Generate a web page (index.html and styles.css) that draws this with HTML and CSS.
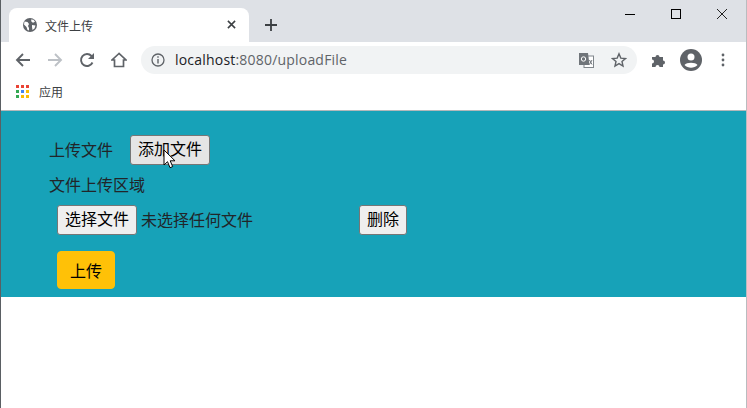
FILE: index.html
```html
<!DOCTYPE html>
<html lang="zh">
<head>
<meta charset="utf-8">
<title>文件上传</title>
<link rel="stylesheet" href="styles.css">
</head>
<body>
<div class="window">
  <div class="tabstrip">
    <div class="tab">
      <svg class="favicon" viewBox="0 0 16 16"><circle cx="8" cy="8" r="7" fill="#5f6368"/><path d="M2.500 4.500l3 .5 1.500 2-1 2 1 2v2.500l-1.500-.5-1-3-2.500-2.500zM9 2.500l2.500.3 1.500 2-2 1-1.500-1zM10 8l3.500.5-1 3-2 1.500-.5-3z" fill="#fff"/></svg>
      <span class="tab-title">文件上传</span>
      <svg class="tab-close" viewBox="0 0 10 10"><path d="M1 1l8 8M9 1l-8 8" stroke="#3c4043" stroke-width="1.700" fill="none"/></svg>
    </div>
    <svg class="newtab" viewBox="0 0 12 12"><path d="M6 0v12M0 6h12" stroke="#3c4043" stroke-width="1.800" fill="none"/></svg>
    <div class="winctl">
      <svg viewBox="0 0 12 12"><path d="M1 6.500h10" stroke="#000" stroke-width="1" fill="none"/></svg>
      <svg viewBox="0 0 12 12"><rect x="1.500" y="1.500" width="9" height="9" stroke="#000" stroke-width="1" fill="none"/></svg>
      <svg viewBox="0 0 12 12"><path d="M1 1l10 10M11 1L1 11" stroke="#222" stroke-width="1" fill="none"/></svg>
    </div>
  </div>
  <div class="toolbar">
    <svg class="nav" viewBox="0 0 16 16"><path d="M15 8H2M8 2L2 8l6 6" stroke="#5f6368" stroke-width="1.900" fill="none"/></svg>
    <svg class="nav" viewBox="0 0 16 16"><path d="M1 8h13M8 2l6 6-6 6" stroke="#bdc1c6" stroke-width="1.900" fill="none"/></svg>
    <svg class="nav" viewBox="0 0 16 16"><path d="M13.500 10.500A6 6 0 1 1 12.500 4L14 5.500" stroke="#5f6368" stroke-width="1.900" fill="none"/><path d="M15 1v6H9z" fill="#5f6368"/></svg>
    <svg class="nav" viewBox="0 0 16 16"><path d="M8 1.500L1 8h2.500v6.500h9V8H15z" stroke="#5f6368" stroke-width="1.700" fill="none"/></svg>
    <div class="omnibox">
      <svg class="info" viewBox="0 0 14 14"><circle cx="7" cy="7" r="6" stroke="#5f6368" stroke-width="1.300" fill="none"/><path d="M7 6v4.500M7 3.300v1.500" stroke="#5f6368" stroke-width="1.400"/></svg>
      <span class="url"><span class="host">localhost</span>:8080/uploadFile</span>
      <svg class="translate" viewBox="0 0 15 15"><rect x="5" y="3" width="9.500" height="11.500" fill="#fff" stroke="#80868b"/><path d="M0 0h9l1.500 12H0z" fill="#70757a"/><circle cx="4.500" cy="6" r="2.200" stroke="#fff" fill="none"/><path d="M10.500 7l2.500 4.500M13 7l-2.500 4.500" stroke="#70757a"/></svg>
      <svg class="star" viewBox="0 0 16 16"><path d="M8 1.800l1.800 4.300 4.700.4-3.500 3 1 4.500L8 11.600 4 14l1-4.500-3.500-3 4.700-.4z" stroke="#5f6368" stroke-width="1.400" fill="none"/></svg>
    </div>
    <svg class="ext" viewBox="0 0 16 16"><path d="M1 5h3.500a2 2 0 0 1 4 0H12v3.500a2 2 0 0 1 0 4V15H8.500a2 2 0 0 0-4 0H1v-3.500a2 2 0 0 0 0-4z" fill="#5f6368"/></svg>
    <svg class="avatar" viewBox="0 0 22 22"><circle cx="11" cy="11" r="11" fill="#5f6368"/><circle cx="11" cy="8" r="3.500" fill="#fff"/><path d="M4.500 16c2-3 11-3 13 0-3.500 3.500-9.500 3.500-13 0z" fill="#fff"/></svg>
    <svg class="menu" viewBox="0 0 4 14"><circle cx="2" cy="2" r="1.400" fill="#5f6368"/><circle cx="2" cy="7" r="1.400" fill="#5f6368"/><circle cx="2" cy="12" r="1.400" fill="#5f6368"/></svg>
  </div>
  <div class="bookmarks">
    <svg class="apps" viewBox="0 0 14 14">
      <rect x="0" y="0" width="3" height="3" fill="#ea4335"/><rect x="5" y="0" width="3" height="3" fill="#ea4335"/><rect x="10" y="0" width="3" height="3" fill="#ea4335"/>
      <rect x="0" y="5" width="3" height="3" fill="#34a853"/><rect x="5" y="5" width="3" height="3" fill="#4285f4"/><rect x="10" y="5" width="3" height="3" fill="#fbbc04"/>
      <rect x="0" y="10" width="3" height="3" fill="#34a853"/><rect x="5" y="10" width="3" height="3" fill="#fbbc04"/><rect x="10" y="10" width="3" height="3" fill="#fbbc04"/>
    </svg>
    <span class="bm-label">应用</span>
  </div>
  <main class="page">
    <div class="panel">
      <div class="row-add">
        <span class="label">上传文件</span>
        <button class="btn btn-add" type="button">添加文件</button>
      </div>
      <div class="area-title">文件上传区域</div>
      <div class="row-file">
        <button class="btn btn-choose" type="button">选择文件</button>
        <span class="nofile">未选择任何文件</span>
        <button class="btn btn-del" type="button">删除</button>
      </div>
      <button class="btn-upload" type="button">上传</button>
    </div>
  </main>
  <svg class="cursor" viewBox="0 0 14 21"><path d="M1 1v15l3.500-3.300 2.500 6 2.700-1.100-2.500-5.800H12z" fill="#fff" stroke="#000" stroke-width="1"/></svg>
</div>
</body>
</html>
```
FILE: styles.css
```css
* { box-sizing: border-box; }
html, body { margin: 0; height: 100%; overflow: hidden; background: #fff; }
body { font-family: "Liberation Sans", "Noto Sans CJK SC", sans-serif; }
.window {
  position: relative;
  width: 747px;
  height: 408px;
  display: flex;
  flex-direction: column;
  border-left: 1px solid #5a5f63;
  border-right: 1px solid #b9bcbf;
}
.tabstrip {
  height: 42px;
  background: #dee1e6;
  display: flex;
  align-items: flex-end;
  padding-left: 8px;
}
.tab {
  width: 240px;
  height: 34px;
  background: #fff;
  border-radius: 8px 8px 0 0;
  display: flex;
  align-items: center;
  padding: 0 13px;
}
.favicon { width: 16px; height: 16px; flex: none; margin-top: -1px; }
.tab-title { font-size: 12px; color: #3c4043; margin-left: 7px; flex: 1; margin-top: 1px; }
.tab-close { width: 9px; height: 9px; margin-top: -1px; }
.newtab { width: 12px; height: 12px; margin: 0 0 11px 16px; }
.winctl { margin-left: auto; align-self: flex-start; display: flex; gap: 34px; padding: 8px 18px 0 0; }
.winctl svg { width: 12px; height: 12px; display: block; }
.toolbar {
  height: 36px;
  display: flex;
  align-items: center;
  background: #fff;
  padding-left: 14px;
}
.nav { width: 16px; height: 16px; margin-right: 16px; flex: none; }
.omnibox {
  width: 496px;
  height: 28px;
  margin-left: -2px;
  border-radius: 14px;
  background: #f1f3f4;
  display: flex;
  align-items: center;
  padding: 0 10px;
}
.info { width: 14px; height: 14px; flex: none; }
.url { font-size: 14px; letter-spacing: 0.2px; padding-bottom: 2px; color: #5f6368; margin-left: 10px; flex: 1; font-family: "Open Sans", sans-serif; }
.host { color: #202124; }
.translate { width: 15px; height: 15px; margin-right: 17px; }
.star { width: 16px; height: 16px; margin-right: 0; }
.ext { width: 16px; height: 16px; margin-left: 14px; flex: none; }
.avatar { width: 22px; height: 22px; margin-left: 13px; flex: none; }
.menu { width: 4px; height: 14px; margin-left: 19px; flex: none; }
.bookmarks {
  height: 33px;
  display: flex;
  align-items: center;
  padding: 0 0 5px 15px;
  border-bottom: 1px solid #b5b8ba;
  background: #fff;
}
.apps { width: 14px; height: 14px; margin-top: 1px; }
.bm-label { font-size: 12px; color: #3c4043; margin-left: 9px; }
.page { flex: 1; background: #fff; }
.panel {
  height: 186px;
  background: #17a2b8;
  color: #212529;
  font-size: 16px;
  padding: 24px 0 0 48px;
}
.row-add { display: flex; align-items: center; height: 30px; }
.label { width: 81px; padding-bottom: 2px; }
.btn {
  font-family: inherit;
  font-size: 16px;
  color: #000;
  height: 30px;
  padding: 0 6px;
  border: 1px solid #767676;
  border-radius: 3px;
  background: #efefef;
  line-height: 1;
}
.btn-add { background: #e5e5e5; width: 80px; }
.area-title { margin-top: 9px; height: 24px; line-height: 24px; }
.row-file { display: flex; align-items: center; margin: 7px 0 0 8px; height: 30px; }
.btn-choose { width: 80px; }
.nofile { margin-left: 4px; width: 218px; padding-bottom: 2px; }
.btn-del { width: 48px; }
.btn-upload {
  display: block;
  margin: 16px 0 0 8px;
  width: 58px;
  height: 38px;
  font-family: inherit;
  font-size: 16px;
  color: #000;
  background: #ffc107;
  border: 1px solid #ffc107;
  border-radius: 4px;
}
.cursor { position: absolute; left: 162px; top: 149px; width: 14px; height: 21px; }
```
